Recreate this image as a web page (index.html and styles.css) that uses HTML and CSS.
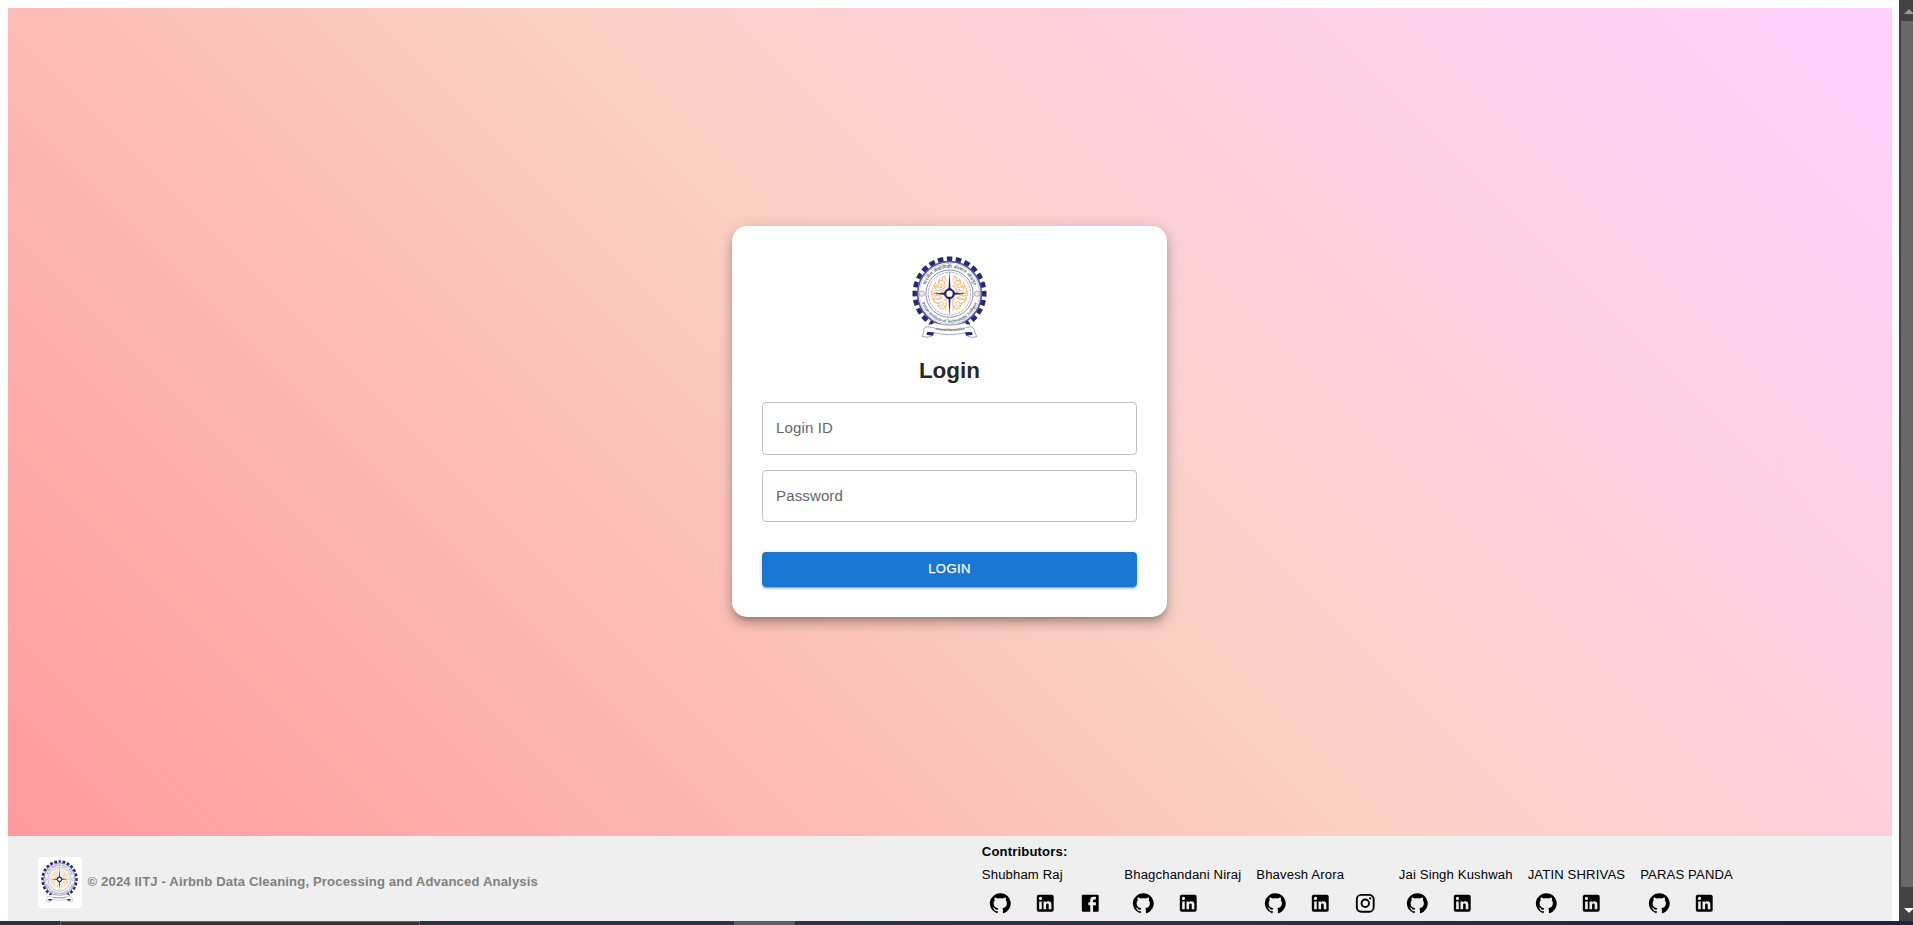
FILE: index.html
```html
<!DOCTYPE html>
<html lang="en">
<head>
<meta charset="utf-8">
<title>Login</title>
<link rel="stylesheet" href="styles.css">
</head>
<body>
<svg class="defs" width="0" height="0" aria-hidden="true">
  <symbol id="github" viewBox="0 0 24 24"><path d="M12 1.27a11 11 0 00-3.48 21.46c.55.09.73-.28.73-.55v-1.84c-3.03.64-3.67-1.46-3.67-1.46-.55-1.29-1.28-1.65-1.28-1.65-.92-.65.1-.65.1-.65 1.1 0 1.73 1.1 1.73 1.1.92 1.65 2.57 1.2 3.21.92a2 2 0 01.64-1.47c-2.47-.27-5.04-1.19-5.04-5.5 0-1.1.46-2.1 1.2-2.84a3.76 3.76 0 010-2.93s.91-.28 3.11 1.1c1.8-.49 3.7-.49 5.5 0 2.1-1.38 3.02-1.1 3.02-1.1a3.76 3.76 0 01.1 2.93c.83.74 1.2 1.74 1.2 2.94 0 4.21-2.57 5.13-5.04 5.4.45.37.82.92.82 2.02v3.03c0 .27.1.64.73.55A11 11 0 0012 1.27"/></symbol>
  <symbol id="linkedin" viewBox="0 0 24 24"><path d="M19 3a2 2 0 0 1 2 2v14a2 2 0 0 1-2 2H5a2 2 0 0 1-2-2V5a2 2 0 0 1 2-2h14m-.5 15.5v-5.3a3.26 3.26 0 0 0-3.26-3.26c-.85 0-1.84.52-2.32 1.3v-1.11h-2.79v8.37h2.79v-4.93c0-.77.62-1.4 1.39-1.4a1.4 1.4 0 0 1 1.4 1.4v4.93h2.79M6.88 8.56a1.68 1.68 0 0 0 1.68-1.68c0-.93-.75-1.69-1.68-1.69a1.69 1.69 0 0 0-1.69 1.69c0 .93.76 1.68 1.69 1.68m1.39 9.94v-8.37H5.5v8.37h2.77z"/></symbol>
  <symbol id="facebook" viewBox="0 0 24 24"><path fill-rule="evenodd" d="M4 3h16a1 1 0 0 1 1 1v16a1 1 0 0 1-1 1H4a1 1 0 0 1-1-1V4a1 1 0 0 1 1-1m14 2h-2.5A3.5 3.5 0 0 0 12 8.5V11h-2v3h2v7h3v-7h3v-3h-3V9a1 1 0 0 1 1-1h2V5z"/></symbol>
  <symbol id="instagram" viewBox="0 0 24 24"><path d="M7.8 2h8.4C19.4 2 22 4.6 22 7.8v8.4a5.8 5.8 0 0 1-5.8 5.8H7.8C4.6 22 2 19.4 2 16.2V7.8A5.8 5.8 0 0 1 7.8 2m-.2 2A3.6 3.6 0 0 0 4 7.6v8.8C4 18.39 5.61 20 7.6 20h8.8a3.6 3.6 0 0 0 3.6-3.6V7.6C20 5.61 18.39 4 16.4 4H7.6m9.65 1.5a1.25 1.25 0 1 1 0 2.5 1.25 1.25 0 0 1 0-2.5M12 7a5 5 0 1 1 0 10 5 5 0 0 1 0-10m0 2a3 3 0 1 0 0 6 3 3 0 0 0 0-6z"/></symbol>
</svg>

<div class="browser">
  <div class="viewport">
    <main class="hero">
      <form class="card">
        <svg class="card-logo" viewBox="34 32 226 246" preserveAspectRatio="none">
          <g id="crest">
            <circle cx="147" cy="145" r="112" fill="#fff"/>
            <circle cx="147" cy="145" r="104" fill="none" stroke="#29296f" stroke-width="15" pathLength="240" stroke-dasharray="6.2 3.8" stroke-dashoffset="3.1" transform="rotate(-90 147 145)"/>
            <circle cx="147" cy="145" r="96" fill="#fff" stroke="#5a5a9c" stroke-width="5"/>
            <circle cx="147" cy="145" r="91" fill="none" stroke="#b9b9da" stroke-width="2"/>
            <circle cx="147" cy="145" r="71" fill="none" stroke="#7373ab" stroke-width="2.5"/>
            <circle cx="147" cy="145" r="64" fill="none" stroke="#8585b5" stroke-width="2" stroke-dasharray="9 2"/>
            <path id="arc-top" d="M70 145a77 77 0 0 1 154 0" fill="none"/>
            <path id="arc-bottom" d="M60 145a87 87 0 0 0 174 0" fill="none"/>
            <text class="crest-text"><textPath href="#arc-top" startOffset="50%" text-anchor="middle" textLength="190">भारतीय प्रौद्योगिकी संस्थान जोधपुर</textPath></text>
            <text class="crest-text"><textPath href="#arc-bottom" startOffset="50%" text-anchor="middle" textLength="218">Indian Institute of Technology Jodhpur</textPath></text>
            <g fill="#f6e5dc" stroke="#998fa9" stroke-width="2"><circle cx="64" cy="145" r="8"/><circle cx="230" cy="145" r="8"/></g>
            <g id="foliage" fill="none" stroke="#f2b878" stroke-width="3">
              <path d="M137 91l-13 6 3 10-12-2-2 11 12 1-2 11-14-7-7 7 9 8 12-4 5 9-15 4-8-6-10 8 9 6 10-4 10 8-9 6-16-2 2 9 12 5 9-7 8 7-7 8-12-3 8 10 10 1 4-10 4 15M130 94l7 11-7 8 7 12M106 109l-6 14 14 3M127 109l8 5M98 127l-6 18 7 17M115 136l13 7M106 152l4-11 9 7M105 165l8-8 10 2M118 178l-7-8M128 166l9-7v25M125 119l8 6-7 8 10 6M90 139l8 2M94 158l6 10 8 4M111 117l-6 4M118 99l-3 12"/>
            </g>
            <use href="#foliage" transform="translate(294 0) scale(-1 1)"/>
            <path fill="#24266c" d="M147 76l3 52 14 14 33 3-33 3-14 14-3 50-3-50-14-14-33-3 33-3 14-14z"/>
            <circle cx="147" cy="145" r="16" fill="#24266c"/><circle cx="147" cy="145" r="9.5" fill="#fff"/>
            <path fill="#fff" stroke="#7778a8" stroke-width="2" d="M83 244q-15-2-14 16l-4 14q18 5 31-3l3-9q48 12 97 0l3 9q14 9 30 3l-6-14q-1-14-13-16-64 15-127 0z"/>
            <path d="M92 230l-9 14q64 18 127 0l-8-14q-55 20-110 0z" fill="#fff" stroke="#8a8ab4" stroke-width="1.5"/>
            <path fill="#24266c" d="M80 260l20 1-3 10-20-3zM214 260l-20 1 3 10 20-3zM87 232l8-6 5 8-9 4zM207 232l-8-6-5 8 9 4z"/>
            <path id="ribbon" d="M98 251q50 14 100 0" fill="none"/>
            <text class="crest-motto"><textPath href="#ribbon" startOffset="50%" text-anchor="middle" textLength="90">॥ त्वं ज्ञानमयो विज्ञानमयोऽसि ॥</textPath></text>
          </g>
        </svg>
        <h1 class="title">Login</h1>
        <div class="field">Login ID</div>
        <div class="field field-password">Password</div>
        <button class="submit" type="button">LOGIN</button>
      </form>
    </main>
    <footer class="footer">
      <div class="brand">
        <div class="brand-logo"><svg class="brand-crest" viewBox="34 32 226 246" preserveAspectRatio="none"><use href="#crest"/></svg></div>
        <span class="copyright">© 2024 IITJ - Airbnb Data Cleaning, Processing and Advanced Analysis</span>
      </div>
      <section class="contributors">
        <h2 class="contributors-title">Contributors:</h2>
        <div class="people">
          <div class="person">Shubham Raj<div class="links"><svg><use href="#github"/></svg><svg><use href="#linkedin"/></svg><svg><use href="#facebook"/></svg></div></div>
          <div class="person">Bhagchandani Niraj<div class="links"><svg><use href="#github"/></svg><svg><use href="#linkedin"/></svg></div></div>
          <div class="person">Bhavesh Arora<div class="links"><svg><use href="#github"/></svg><svg><use href="#linkedin"/></svg><svg><use href="#instagram"/></svg></div></div>
          <div class="person">Jai Singh Kushwah<div class="links"><svg><use href="#github"/></svg><svg><use href="#linkedin"/></svg></div></div>
          <div class="person">JATIN SHRIVAS<div class="links"><svg><use href="#github"/></svg><svg><use href="#linkedin"/></svg></div></div>
          <div class="person">PARAS PANDA<div class="links"><svg><use href="#github"/></svg><svg><use href="#linkedin"/></svg></div></div>
        </div>
      </section>
    </footer>
  </div>
  <div class="scrollbar">
    <svg class="arrow" viewBox="0 0 14 21"><path d="M5 14l5-5 5 5z" fill="#9b9b9b"/></svg>
    <div class="thumb"></div>
    <svg class="arrow-down" viewBox="0 0 14 34"><path d="M5 21h10l-5 5z" fill="#fff"/></svg>
  </div>
</div>
<div class="taskbar"><div class="task"></div><div class="task-light"></div></div>
</body>
</html>
```
FILE: styles.css
```css
* { box-sizing: border-box; }
html { height: 925px; overflow: hidden; }
body {
  margin: 0;
  height: 925px;
  overflow: hidden;
  background: #fff;
  font-family: "Liberation Sans", Arial, sans-serif;
}
.defs { display: block; }
.browser { display: flex; height: 921px; overflow: hidden; }
.viewport { flex: 1; padding: 8px 7px 0 8px; }
.hero {
  height: 828px;
  display: flex;
  align-items: center;
  justify-content: center;
  padding: 0 1px 1px 0;
  background: linear-gradient(45deg, #ff9a9e 0%, #fad0c4 50%, #ffd1ff 100%);
}
.card {
  width: 435px;
  height: 391px;
  padding: 30px;
  display: flex;
  flex-direction: column;
  align-items: center;
  background: #fff;
  border-radius: 15px;
  box-shadow: 0 5px 5px -3px rgba(0,0,0,.2), 0 7px 10px 1px rgba(0,0,0,.14), 0 3px 14px 2px rgba(0,0,0,.12);
}
.card-logo { width: 75px; height: 82px; flex: none; }
.title {
  margin: 18px 0 17px;
  font-size: 22.5px;
  line-height: 29px;
  font-weight: 700;
  color: rgba(0,0,0,.87);
}
.field {
  width: 100%;
  height: 53px;
  flex: none;
  margin-bottom: 15px;
  padding: 0 13px;
  border: 1px solid #c1c1c1;
  border-radius: 4px;
  font-size: 15px;
  letter-spacing: .14px;
  line-height: 50px;
  color: #666;
}
.field-password { height: 52px; }
.submit {
  width: 100%;
  height: 35px;
  flex: none;
  margin-top: 15px;
  padding: 0 0 2px;
  border: 0;
  border-radius: 4px;
  background: #1976d2;
  color: #fff;
  font: 500 13.125px "Liberation Sans", Arial, sans-serif;
  letter-spacing: .375px;
  -webkit-text-stroke: .25px #fff;
  box-shadow: 0 3px 1px -2px rgba(0,0,0,.2), 0 2px 2px rgba(0,0,0,.14), 0 1px 5px rgba(0,0,0,.12);
}
.crest-text { font: 700 13px "Liberation Sans", "Noto Sans", sans-serif; fill: #707078; }
.crest-motto { font: 700 9px "Liberation Sans", "Noto Sans", sans-serif; fill: #707078; }
.footer {
  height: 85px;
  display: flex;
  justify-content: space-between;
  padding: 0 159px 0 30px;
  background: #efefef;
  font-size: 13.125px;
  line-height: 19px;
  letter-spacing: .14px;
}
.brand { display: flex; align-items: center; gap: 6px; padding-top: 8px; }
.brand-logo { width: 43.5px; height: 51px; padding: 3px; flex: none; background: #fff; border-radius: 4px; }
.brand-crest { display: block; width: 37px; height: 42px; }
.copyright { padding-bottom: 2px; white-space: nowrap; font-weight: 700; color: #808080; }
.contributors { padding-top: 6px; color: #000; }
.contributors-title { margin: 0 0 4px; font-size: 13.125px; line-height: 19px; }
.people { display: flex; gap: 15px; }
.person { white-space: nowrap; }
.links { display: flex; gap: 22.5px; padding: 7.5px; }
.links svg { width: 22.5px; height: 22.5px; flex: none; }
.scrollbar { width: 14px; display: flex; flex-direction: column; background: #424242; overflow: hidden; }
.arrow { width: 14px; height: 21px; flex: none; }
.thumb { flex: 1; margin-left: 2px; background: #686868; }
.arrow-down { width: 14px; height: 34px; flex: none; }
.taskbar { height: 4px; display: flex; background: linear-gradient(90deg, #263640, #27384a 50%, #1d2444); }
.task { width: 360px; margin-left: 60px; background: #353233; border: solid #666; border-width: 1px 1px 0; }
.task-light { width: 61px; margin-left: 314px; background: #566168; }
```
